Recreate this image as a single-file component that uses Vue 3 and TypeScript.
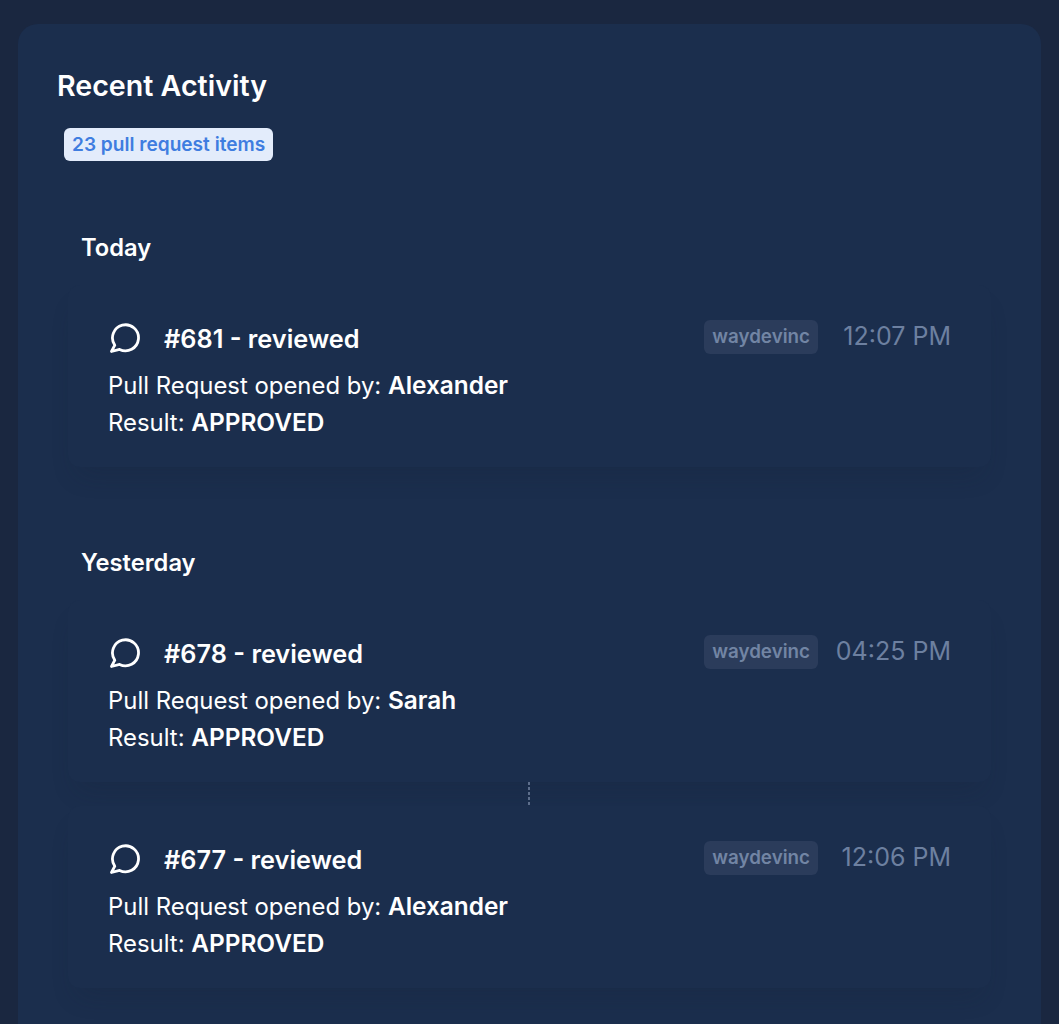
<template>
  <div class="page">
    <section class="panel">
      <h1 class="title">Recent Activity</h1>
      <span class="count">23 pull request items</span>

      <div v-for="group in groups" :key="group.label" class="group">
        <h2 class="day">{{ group.label }}</h2>
        <template v-for="(item, i) in group.items" :key="item.id">
          <div v-if="i > 0" class="connector"></div>
          <article class="card">
            <div class="card-head">
              <svg class="icon" viewBox="0 0 32 32" fill="none" stroke="currentColor" stroke-width="2.8" stroke-linejoin="round" stroke-linecap="round">
                <path d="M3.5 29.5 L6.8 23.2 A13 13 0 1 1 11.6 27.4 Z" />
              </svg>
              <span class="pr">#{{ item.id }} - reviewed</span>
              <span class="org">waydevinc</span>
              <span class="time">{{ item.time }}</span>
            </div>
            <p class="line">Pull Request opened by: <strong>{{ item.author }}</strong></p>
            <p class="line">Result: <strong>APPROVED</strong></p>
          </article>
        </template>
      </div>
    </section>
  </div>
</template>

<script setup lang="ts">
interface Activity {
  id: number
  time: string
  author: string
}

const groups: { label: string; items: Activity[] }[] = [
  { label: 'Today', items: [{ id: 681, time: '12:07 PM', author: 'Alexander' }] },
  {
    label: 'Yesterday',
    items: [
      { id: 678, time: '04:25 PM', author: 'Sarah' },
      { id: 677, time: '12:06 PM', author: 'Alexander' },
    ],
  },
]
</script>

<style>
html, body { background: #1a2740; }
</style>

<style scoped>
.page {
  height: 1024px;
  box-sizing: border-box;
  overflow: hidden;
  padding: 24px 18px 0;
  background: #1a2740;
  font-family: Inter, "Noto Sans", sans-serif;
  color: #fff;
}
.panel {
  min-height: 1100px;
  box-sizing: border-box;
  padding: 42px 50px 0 39px;
  background: #1b2e4d;
  border-radius: 20px;
}
.title {
  margin: 0;
  font-size: 28.6px;
  line-height: 40px;
  font-weight: 600;
}
.count {
  display: block;
  width: fit-content;
  margin: 22px 0 0 7px;
  padding: 0 8px;
  height: 33px;
  line-height: 33px;
  background: #e3ecfb;
  border-radius: 6px;
  color: #3f7de0;
  font-size: 19.1px;
  font-weight: 600;
}
.group { margin: 71px 0 0 11px; }
.count + .group { margin-top: 62px; }
.day {
  margin: 0 0 12px;
  padding-left: 13px;
  font-size: 23.7px;
  line-height: 50px;
  font-weight: 600;
}
.card {
  height: 182px;
  padding: 36px 40px 0;
  box-sizing: border-box;
  background: #1b2e4d;
  border-radius: 12px;
  box-shadow: 0 16px 26px -10px rgba(20, 32, 56, 0.24);
}
.card-head {
  display: flex;
  align-items: center;
  height: 34px;
  margin-bottom: 12px;
}
.icon { width: 32px; height: 32px; flex: none; margin-right: 24px; }
.pr { font-size: 25.3px; font-weight: 600; }
.org {
  margin: 0 0 2px auto;
  padding: 0 8px;
  height: 34px;
  line-height: 33px;
  background: #2b3c5b;
  border-radius: 6px;
  color: #7285a4;
  font-size: 18.8px;
  font-weight: 600;
}
.time {
  flex: none;
  width: 116px;
  margin: 0 0 4px 17px;
  color: #6d80a0;
  font-size: 25px;
  text-align: right;
  white-space: nowrap;
}
.line {
  margin: 0;
  font-size: 23.9px;
  line-height: 37px;
  color: #fff;
}
.line strong { font-size: 24.4px; font-weight: 600; }
.connector {
  position: relative;
  left: -1px;
  width: 2px;
  height: 24px;
  margin: 0 auto;
  background: repeating-linear-gradient(#5d6e8b 0 3px, transparent 3px 5px);
}
</style>
